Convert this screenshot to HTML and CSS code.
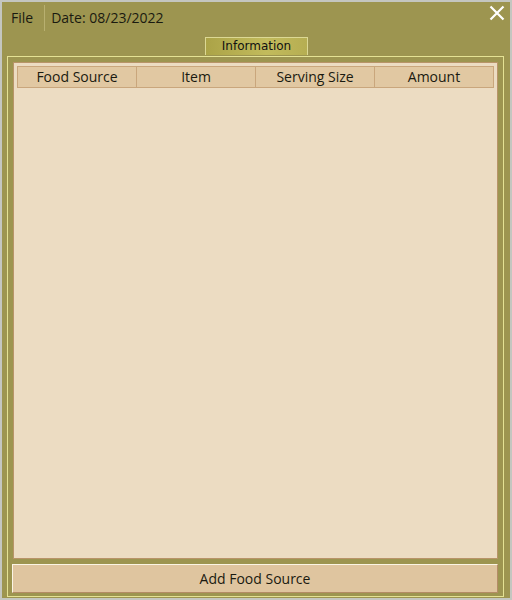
FILE: index.html
```html
<!DOCTYPE html>
<html>
<head>
<meta charset="utf-8">
<link rel="stylesheet" href="styles.css">
</head>
<body>
<div class="win">
  <div class="menubar">
    <span class="menu-item">File</span>
    <span class="divider"></span>
    <span class="menu-item">Date: 08/23/2022</span>
    <svg class="close" width="16" height="16" viewBox="0 0 16 16"><path d="M1.5 1.5 L14.5 14.5 M14.5 1.5 L1.5 14.5" stroke="#fff" stroke-width="2.2" fill="none"/></svg>
  </div>
  <div class="tabs"><div class="tab">Information</div></div>
  <div class="panel">
    <div class="content">
      <div class="thead">
        <div class="th">Food Source</div>
        <div class="th">Item</div>
        <div class="th">Serving Size</div>
        <div class="th">Amount</div>
      </div>
    </div>
    <div class="btn">Add Food Source</div>
  </div>
</div>
</body>
</html>
```
FILE: styles.css
```css
html, body { margin: 0; padding: 0; }
body {
  background: #c4c6c0;
  width: 512px;
  height: 600px;
  font-family: "Open Sans", Lato, sans-serif;
  font-size: 14px;
  color: #1a1a10;
}
.win {
  position: relative;
  margin: 2px;
  width: 508px;
  height: 596px;
  background: #9d9550;
  display: flex;
  flex-direction: column;
}
.menubar {
  height: 32px;
  display: flex;
  align-items: center;
  padding-left: 9px;
}
.menu-item { line-height: 16px; }
.divider {
  width: 1px;
  height: 26px;
  background: #b8b070;
  margin: 0 6px 0 11px;
}
.close {
  position: absolute;
  right: 5px;
  top: 3px;
}
.tabs {
  display: flex;
  justify-content: center;
  height: 22px;
  align-items: flex-end;
}
.tab {
  width: 101px;
  height: 17px;
  margin-left: 1px;
  margin-bottom: 1px;
  border: 1px solid #dcd894;
  border-bottom: none;
  background: linear-gradient(90deg, #aba347 0%, #c2bb5c 60%, #b6ae52 100%);
  font-family: "DejaVu Sans", sans-serif;
  font-size: 12px;
  line-height: 16px;
  text-align: center;
  color: #111;
}
.panel {
  flex: 1;
  margin: 0 6px 1px 5px;
  border: 1px solid #e4e294;
  display: flex;
  flex-direction: column;
  padding: 5px 5px 3px 5px;
  gap: 5px;
}
.content {
  flex: 1;
  background: #ecdcc2;
  border: 1px solid #b89468;
  padding: 3px;
}
.thead {
  display: flex;
}
.th {
  flex: 1;
  height: 20px;
  border: 1px solid #c9a67c;
  margin-right: -1px;
  background: #e1c8a2;
  text-align: center;
  line-height: 20px;
}
.th:last-child { margin-right: 0; }
.btn {
  height: 27px;
  margin: 0 0 0 -1px;
  background: #dfc59f;
  border-top: 1px solid #fbf5e4;
  border-left: 1px solid #fbf5e4;
  border-right: 1px solid #b48c66;
  border-bottom: 1px solid #b48c66;
  text-align: center;
  line-height: 27px;
}
```
